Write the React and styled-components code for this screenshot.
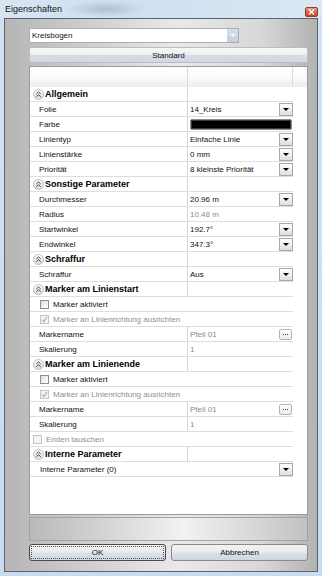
import React from "react";
import styled, { createGlobalStyle, css } from "styled-components";

const GlobalStyle = createGlobalStyle`
  html, body { margin: 0; padding: 0; }
  body { font-family: "Liberation Sans", Arial, sans-serif; background: #c9dbee; }
  * { box-sizing: border-box; }
`;

const Window = styled.div`
  width: 322px;
  height: 576px;
  display: flex;
  flex-direction: column;
  background: linear-gradient(180deg, #d2e2f2 0%, #c8dbef 100%);
`;

const TitleBar = styled.div`
  height: 18px;
  flex: none;
  display: flex;
  justify-content: space-between;
  align-items: flex-start;
  padding: 0 4px 0 5px;
  background:
    radial-gradient(ellipse 40px 8px at 105px 9px, rgba(120,130,150,0.35), transparent),
    linear-gradient(90deg, #d7e5f3 0%, #cfdff0 40%, #dae7f4 100%);
`;

const Title = styled.span`
  font-size: 9px;
  line-height: 18px;
  color: #111;
`;

const CloseButton = styled.div`
  width: 13px;
  height: 10px;
  margin-top: 7px;
  border: 1px solid #9b3a26;
  border-radius: 2px;
  background: linear-gradient(180deg, #eba28c 0%, #d8654a 50%, #c4432b 100%);
  display: flex;
  align-items: center;
  justify-content: center;
`;

const Client = styled.div`
  flex: 1;
  margin: 0 4px 4px 4px;
  border: 1px solid #5f6368;
  background: linear-gradient(90deg, #b6b6b6 0%, #c8c8c8 20%, #e9e9e9 55%, #d8d8d8 82%, #b2b2b2 100%);
  display: flex;
  flex-direction: column;
  padding: 9px 9px 10px 24px;
  min-height: 0;
`;

const Combo = styled.div`
  width: 210px;
  height: 15px;
  flex: none;
  border: 1px solid #abadb3;
  background: #fff;
  display: flex;
  align-items: center;
  justify-content: space-between;
  padding-left: 2px;
  font-size: 8px;
  color: #111;
`;

const ComboArrow = styled.div`
  width: 11px;
  height: 13px;
  background: linear-gradient(180deg, #d6dee9, #c4cfdd);
  display: flex;
  align-items: center;
  justify-content: center;
`;

const WideButton = styled.div`
  margin-top: 4px;
  height: 16px;
  flex: none;
  border: 1px solid #bcbcbc;
  border-radius: 2px;
  background: linear-gradient(180deg, #f7f7f8 0%, #eeeff1 48%, #d6dce6 52%, #d1d8e3 100%);
  display: flex;
  align-items: center;
  justify-content: center;
  font-size: 8px;
  color: #111;
`;

const Grid = styled.div`
  margin-top: 3px;
  flex: 1;
  min-height: 0;
  border: 1px solid #9a9a9a;
  background: #fff;
  display: flex;
  flex-direction: column;
  overflow: hidden;
`;

const Header = styled.div`
  height: 20px;
  flex: none;
  display: grid;
  grid-template-columns: 158px 105px 1fr;
  background: linear-gradient(180deg, #ffffff 0%, #fbfbfb 45%, #eeeeee 100%);
`;

const HeaderCell = styled.div`
  border-right: ${(p) => (p.$last ? "none" : "1px solid #dcdcdc")};
`;

const Rows = styled.div`
  width: 263px;
  display: flex;
  flex-direction: column;
`;

const Row = styled.div`
  height: 15px;
  flex: none;
  border-bottom: 1px solid #dedede;
  display: grid;
  grid-template-columns: ${(p) => (p.$full ? "1fr" : "158px 105px")};
  font-size: 8px;
  color: #111;
`;

const NameCell = styled.div`
  display: flex;
  align-items: center;
  gap: ${(p) => (p.$cat ? "1px" : "4px")};
  padding-left: ${(p) => p.$indent}px;
  border-right: ${(p) => (p.$full ? "none" : "1px solid #d6d6d6")};
  white-space: nowrap;
  overflow: hidden;
  color: ${(p) => (p.$muted ? "#8e8e8e" : "#111")};
  ${(p) =>
    p.$cat &&
    css`
      font-weight: bold;
      font-size: 9px;
      color: #000;
    `}
`;

const FullCell = styled.div`
  display: flex;
  align-items: center;
  justify-content: space-between;
  padding-left: 10px;
`;

const ValueCell = styled.div`
  display: flex;
  align-items: center;
  justify-content: space-between;
  padding-left: 2px;
  color: ${(p) => (p.$muted ? "#8a8a8a" : "#111")};
  white-space: nowrap;
`;

const DropButton = styled.div`
  width: 14px;
  height: 13px;
  flex: none;
  border: 1px solid #a8a8a8;
  background: linear-gradient(180deg, #fdfdfd 0%, #efefef 50%, #dedede 100%);
  display: flex;
  align-items: center;
  justify-content: center;
`;

const Triangle = styled.div`
  width: 0;
  height: 0;
  border-left: 3px solid transparent;
  border-right: 3px solid transparent;
  border-top: 3px solid ${(p) => p.$color || "#000"};
`;

const DotsButton = styled.div`
  width: 13px;
  height: 11px;
  flex: none;
  margin-right: 1px;
  border: 1px solid #b4b4b4;
  border-radius: 2px;
  background: linear-gradient(180deg, #ffffff, #ececec);
  display: flex;
  align-items: center;
  justify-content: center;
  gap: 1px;
`;

const Dot = styled.span`
  width: 1px;
  height: 1px;
  background: #444;
`;

const Swatch = styled.div`
  flex: 1;
  height: 11px;
  margin-right: 1px;
  border: 1px solid #8d8d8d;
  border-radius: 2px;
  background: #000;
  box-shadow: inset 0 0 0 1px #3a3a3a;
`;

const Check = styled.div`
  width: 9px;
  height: 9px;
  flex: none;
  border: 1px solid ${(p) => (p.$disabled ? "#c4c4c4" : "#8e8f8f")};
  background: ${(p) =>
    p.$disabled
      ? "#f4f4f4"
      : "linear-gradient(135deg, #dcdcdc 0%, #f3f3f3 60%, #ffffff 100%)"};
  display: flex;
  align-items: center;
  justify-content: center;
`;

const Description = styled.div`
  margin-top: 2px;
  height: 24px;
  flex: none;
  border: 1px solid #a3a3a3;
  background: linear-gradient(90deg, #b9b9b9 0%, #d2d2d2 25%, #f2f2f2 55%, #d6d6d6 82%, #c2c2c2 100%);
`;

const ButtonRow = styled.div`
  margin-top: 3px;
  height: 17px;
  flex: none;
  display: grid;
  grid-template-columns: 1fr 1fr;
  gap: 5px;
`;

const DialogButton = styled.div`
  border: 1px solid ${(p) => (p.$default ? "#4a4a4a" : "#8a8a8a")};
  border-radius: 3px;
  background: linear-gradient(180deg, #f3f3f3 0%, #ebebeb 48%, #dde2ea 52%, #cfd6e1 100%);
  display: flex;
  align-items: center;
  justify-content: center;
  font-size: 8px;
  color: #111;
  padding: 1px;
`;

const FocusRect = styled.div`
  flex: 1;
  align-self: stretch;
  border: 1px dotted ${(p) => (p.$show ? "#555" : "transparent")};
  display: flex;
  align-items: center;
  justify-content: center;
`;

const CollapseIcon = () => (
  <svg width="11" height="11" viewBox="0 0 11 11">
    <defs>
      <linearGradient id="cg" x1="0" y1="0" x2="0" y2="1">
        <stop offset="0" stopColor="#ffffff" />
        <stop offset="1" stopColor="#dcdcdc" />
      </linearGradient>
    </defs>
    <circle cx="5.5" cy="5.5" r="5" fill="url(#cg)" stroke="#bdbdbd" />
    <path d="M3.3 5 L5.5 2.9 L7.7 5" fill="none" stroke="#3a3a3a" strokeWidth="1" />
    <path d="M3.3 7.8 L5.5 5.7 L7.7 7.8" fill="none" stroke="#3a3a3a" strokeWidth="1" />
  </svg>
);

const CheckMark = ({ color }) => (
  <svg width="7" height="7" viewBox="0 0 7 7">
    <path d="M1 3.5 L2.8 5.5 L6 1" fill="none" stroke={color} strokeWidth="1.1" />
  </svg>
);

const rows = [
  { t: "cat", label: "Allgemein" },
  { t: "prop", label: "Folie", value: "14_Kreis", dd: true },
  { t: "prop", label: "Farbe", swatch: true },
  { t: "prop", label: "Linientyp", value: "Einfache Linie", dd: true },
  { t: "prop", label: "Linienstärke", value: "0 mm", dd: true },
  { t: "prop", label: "Priorität", value: "8 kleinste Priorität", dd: true },
  { t: "cat", label: "Sonstige Parameter" },
  { t: "prop", label: "Durchmesser", value: "20.96 m", dd: true },
  { t: "prop", label: "Radius", value: "10.48 m", muted: true },
  { t: "prop", label: "Startwinkel", value: "192.7°", dd: true },
  { t: "prop", label: "Endwinkel", value: "347.3°", dd: true },
  { t: "cat", label: "Schraffur" },
  { t: "prop", label: "Schraffur", value: "Aus", dd: true },
  { t: "cat", label: "Marker am Linienstart" },
  { t: "check", label: "Marker aktiviert", indent: 10 },
  { t: "check", label: "Marker an Linienrichtung ausrichten", indent: 10, checked: true, disabled: true },
  { t: "prop", label: "Markername", value: "Pfeil 01", muted: true, dots: true },
  { t: "prop", label: "Skalierung", value: "1", muted: true },
  { t: "cat", label: "Marker am Linienende" },
  { t: "check", label: "Marker aktiviert", indent: 10 },
  { t: "check", label: "Marker an Linienrichtung ausrichten", indent: 10, checked: true, disabled: true },
  { t: "prop", label: "Markername", value: "Pfeil 01", muted: true, dots: true },
  { t: "prop", label: "Skalierung", value: "1", muted: true },
  { t: "check", label: "Enden tauschen", indent: 3, disabled: true },
  { t: "cat", label: "Interne Parameter" },
  { t: "full", label: "Interne Parameter (0)", dd: true },
];

const renderRow = (r, i) => {
  if (r.t === "cat") {
    return (
      <Row key={i}>
        <NameCell $cat $indent={3}>
          <CollapseIcon />
          <span>{r.label}</span>
        </NameCell>
        <ValueCell />
      </Row>
    );
  }
  if (r.t === "check") {
    return (
      <Row key={i} $full>
        <NameCell $full $indent={r.indent} $muted={r.disabled}>
          <Check $disabled={r.disabled}>
            {r.checked && <CheckMark color="#a8a8a8" />}
          </Check>
          <span>{r.label}</span>
        </NameCell>
      </Row>
    );
  }
  if (r.t === "full") {
    return (
      <Row key={i} $full>
        <FullCell>
          <span>{r.label}</span>
          <DropButton>
            <Triangle />
          </DropButton>
        </FullCell>
      </Row>
    );
  }
  return (
    <Row key={i}>
      <NameCell $indent={9}>{r.label}</NameCell>
      <ValueCell $muted={r.muted}>
        {r.swatch ? <Swatch /> : <span>{r.value}</span>}
        {r.dd && (
          <DropButton>
            <Triangle />
          </DropButton>
        )}
        {r.dots && (
          <DotsButton>
            <Dot />
            <Dot />
            <Dot />
          </DotsButton>
        )}
      </ValueCell>
    </Row>
  );
};

export default function App() {
  return (
    <>
      <GlobalStyle />
      <Window>
        <TitleBar>
          <Title>Eigenschaften</Title>
          <CloseButton>
            <svg width="7" height="6" viewBox="0 0 7 6">
              <path d="M1 0.5 L6 5.5 M6 0.5 L1 5.5" stroke="#fff" strokeWidth="1.4" />
            </svg>
          </CloseButton>
        </TitleBar>
        <Client>
          <Combo>
            <span>Kreisbogen</span>
            <ComboArrow>
              <Triangle $color="#f4f6f9" />
            </ComboArrow>
          </Combo>
          <WideButton>Standard</WideButton>
          <Grid>
            <Header>
              <HeaderCell />
              <HeaderCell />
              <HeaderCell $last />
            </Header>
            <Rows>{rows.map(renderRow)}</Rows>
          </Grid>
          <Description />
          <ButtonRow>
            <DialogButton $default>
              <FocusRect $show>OK</FocusRect>
            </DialogButton>
            <DialogButton>
              <FocusRect>Abbrechen</FocusRect>
            </DialogButton>
          </ButtonRow>
        </Client>
      </Window>
    </>
  );
}
